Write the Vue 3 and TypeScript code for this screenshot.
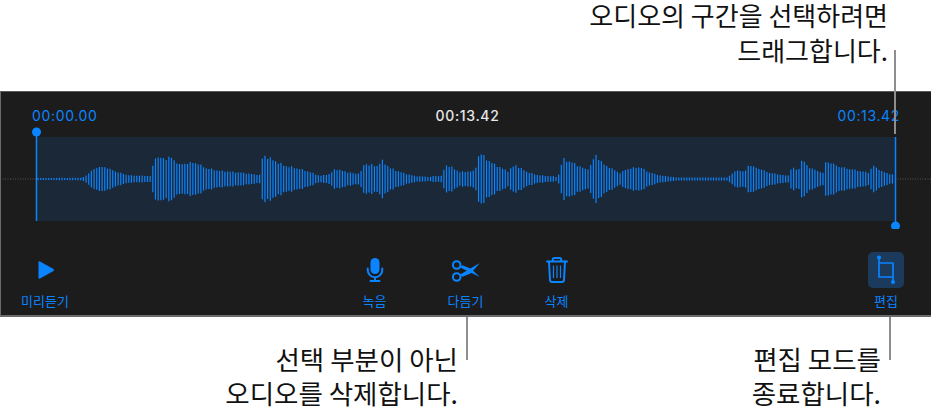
<script setup lang="ts">
const env: [number, number][] = [
  [37, 1], [82, 1.2], [84, 2.5], [88, 5], [95, 11], [105, 12], [112, 9], [120, 6], [130, 3.5], [152, 3],
  [153, 15], [155, 22], [165, 20], [170, 22], [180, 14], [187, 16], [197, 16], [205, 11], [220, 8], [240, 6.5], [260, 4],
  [262, 20], [265, 23], [285, 13], [300, 10], [310, 7], [320, 3], [330, 5], [335, 10], [347, 7], [357, 5], [362, 8],
  [364, 15], [377, 13], [382, 18], [390, 11], [403, 6], [415, 3], [430, 2], [433, 3], [442, 3], [444, 10], [447, 14],
  [453, 11], [460, 7], [475, 8], [478, 22], [481, 25], [490, 17], [503, 10], [508, 8], [515, 14], [527, 7], [537, 4],
  [558, 2], [560, 10], [563, 20], [573, 16], [587, 9], [592, 15], [595, 25], [603, 15], [620, 6], [627, 10], [640, 12],
  [648, 7], [660, 3.5], [677, 1.5], [727, 1.5], [732, 5], [737, 9], [745, 7], [748, 14], [760, 10], [770, 6], [788, 3],
  [792, 12], [798, 8], [802, 19], [810, 11], [823, 6], [826, 18], [840, 12], [860, 8], [870, 6], [872, 14], [883, 7], [894, 4],
]

function envelope(x: number): number {
  for (let i = 1; i < env.length; i++) {
    const [x0, h0] = env[i - 1]
    const [x1, h1] = env[i]
    if (x <= x1) return h0 + ((h1 - h0) * (x - x0)) / (x1 - x0)
  }
  return 1
}

const MID = 42
const bars: string[] = []
for (let x = 38, i = 0; x < 894; x += 2.67, i++) {
  const jitter = 1 + 0.09 * Math.sin(i * 2.4) * Math.cos(i * 0.73)
  const h = Math.max(0.8, envelope(x) * jitter)
  bars.push(`M${x.toFixed(2)} ${(MID - h).toFixed(2)}V${(MID + h).toFixed(2)}`)
}
const wavePath = bars.join('')

const centerTools = ['녹음', '다듬기', '삭제']
</script>

<template>
  <main class="page">
    <header class="callout-top">
      <p class="line">오디오의 구간을 선택하려면</p>
      <p class="line">드래그합니다.</p>
      <span class="leader leader-top"></span>
    </header>

    <section class="panel">
      <div class="times">
        <span class="blue">00:00.00</span>
        <span class="white">00:13.42</span>
        <span class="blue">00:13.42</span>
      </div>

      <svg class="wave" width="931" height="102" viewBox="0 -10 931 102">
        <line x1="0" x2="931" :y1="MID" :y2="MID" class="dash" />
        <rect x="37" y="0" width="858" height="84" class="selection" />
        <path :d="wavePath" class="bars" />
        <line x1="36.5" x2="36.5" y1="-5" y2="84" class="handle" />
        <circle cx="36.5" cy="-5" r="4.5" class="dot" />
        <line x1="895.5" x2="895.5" y1="0" y2="89" class="handle" />
        <circle cx="895.5" cy="89" r="4.5" class="dot" />
      </svg>

      <nav class="toolbar">
        <button class="tool">
          <span class="icon-box">
            <svg width="30" height="30" viewBox="0 0 30 30">
              <path d="M8.5 7.2 Q8.5 5.6 10 6.4 L23.500 14 Q24.500 15 23.500 16 L10 23.6 Q8.5 24.4 8.5 22.8Z" class="fill" />
            </svg>
          </span>
          <span>미리듣기</span>
        </button>

        <div class="center">
          <button v-for="(label, i) in centerTools" :key="label" class="tool">
            <span class="icon-box">
              <svg v-if="i === 0" width="30" height="30" viewBox="0 0 30 30">
                <rect x="10.5" y="3" width="9" height="16" rx="4.5" class="fill" />
                <path d="M7.7 13.5v1.5a7.3 7.3 0 0 0 14.6 0v-1.5M15 22.5v3.5M10.5 26h9" class="stroke" />
              </svg>
              <svg v-else-if="i === 1" width="30" height="30" viewBox="0 0 30 30">
                <circle cx="5.700" cy="10" r="3.800" class="stroke" />
                <circle cx="5.700" cy="22" r="3.800" class="stroke" />
                <path d="M8.800 19.800 L28.800 8 L20 18.200 L11.500 21.800Z" class="fill" />
                <path d="M8.800 12.200 L28.800 22 L20 13.800 L11.500 10.200Z" class="fill" />
              </svg>
              <svg v-else width="30" height="30" viewBox="0 0 30 30">
                <path d="M5 6.5h20M10.8 6.5V4.6Q10.8 3 12.4 3h5.2Q19.2 3 19.2 4.6V6.5" class="stroke" />
                <path d="M7 6.5l1 18.5Q8.2 27 10 27h10Q21.8 27 22 25l1-18.5" class="stroke" />
                <path d="M11.5 10.5v12.5M15 10.5v12.5M18.5 10.5v12.5" class="thin" />
              </svg>
            </span>
            <span>{{ label }}</span>
          </button>
        </div>

        <button class="tool">
          <span class="icon-box active">
            <svg width="36" height="36" viewBox="0 0 36 36">
              <path d="M11 5.500V25H25M11 11H25V30" class="stroke thin-stroke" />
              <circle cx="11" cy="5.500" r="2.100" class="fill" />
              <circle cx="25" cy="30" r="2.100" class="fill" />
            </svg>
          </span>
          <span>편집</span>
        </button>
      </nav>
    </section>

    <footer class="notes">
      <div class="note note-left">
        <span class="leader leader-bottom"></span>
        <p>선택 부분이 아닌<br />오디오를 삭제합니다.</p>
      </div>
      <div class="note note-right">
        <span class="leader leader-bottom"></span>
        <p>편집 모드를<br />종료합니다.</p>
      </div>
    </footer>
  </main>
</template>

<style>
html, body { margin: 0; background: #fff; }
</style>

<style scoped>
.page {
  width: 931px;
  height: 418px;
  overflow: hidden;
  position: relative;
  background: #fff;
  font-family: "Noto Sans CJK KR", "Noto Sans", sans-serif;
}
p { margin: 0; }
.callout-top {
  position: relative;
  height: 89px;
  padding: 2px 43px 0 0;
  text-align: right;
  color: #111;
  font-size: 26px;
  font-weight: 400;
  z-index: 2;
}
.line { line-height: 26px; margin-bottom: 9px; }
.note {
  position: relative;
  text-align: right;
  color: #111;
  font-size: 26.5px;
  font-weight: 400;
  line-height: 33.5px;
  padding-top: 25px;
}
.leader {
  position: absolute;
  width: 2px;
  background: #8e8e8e;
}
.leader-top { left: 894px; top: 50px; height: 84px; }
.leader-bottom { right: -10px; top: 0; height: 43px; }
.panel {
  height: 226px;
  box-sizing: border-box;
  background: #1c1c1c;
  border-top: 1px solid #5a5a5a;
  border-bottom: 2px solid #6a6a6a;
  border-left: 1px solid #6a6a6a;
  display: flex;
  flex-direction: column;
  overflow: hidden;
}
.times {
  display: flex;
  justify-content: space-between;
  padding: 15px 31px 0 31px;
  height: 20px;
  font-family: Inter, "Liberation Sans", sans-serif;
  font-size: 14px;
  font-weight: 400;
  line-height: 17px;
  letter-spacing: 0.65px;
}
.blue { color: #0a84ff; }
.white { color: #e8e8e8; font-weight: 500; }
.wave {
  display: block;
  margin-left: -1px;
  flex: none;
}
.dash { stroke: #555; stroke-width: 1; stroke-dasharray: 1 1.5; }
.selection { fill: #1b2838; }
.bars { stroke: #0a84ff; stroke-width: 1.2; fill: none; }
.handle { stroke: #0a84ff; stroke-width: 1.5; }
.dot, .fill { fill: #0a84ff; }
.stroke { fill: none; stroke: #0a84ff; stroke-width: 2; stroke-linecap: round; stroke-linejoin: round; }
.thin-stroke { stroke-width: 1.7; }
.thin { fill: none; stroke: #0a84ff; stroke-width: 1.2; }
.toolbar {
  display: flex;
  justify-content: space-between;
  margin-left: -1px;
  padding-top: 23px;
}
.center { display: flex; }
.tool {
  width: 90px;
  padding: 0;
  border: 0;
  background: none;
  color: #0a84ff;
  font: inherit;
  font-size: 13px;
  line-height: 18px;
  display: flex;
  flex-direction: column;
  align-items: center;
  gap: 4px;
}
.center .tool { width: 91px; }
.icon-box {
  width: 36px;
  height: 36px;
  display: flex;
  align-items: center;
  justify-content: center;
  border-radius: 5px;
}
.icon-box.active { background: #1b3a5c; }
.notes { display: flex; }
.note-left { width: 458px; }
.note-right { width: 423px; }
</style>
